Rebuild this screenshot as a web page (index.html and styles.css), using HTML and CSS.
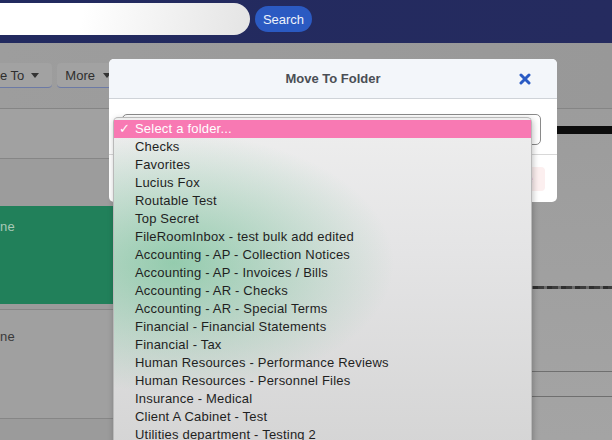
FILE: index.html
```html
<!DOCTYPE html>
<html>
<head>
<meta charset="utf-8">
<link rel="stylesheet" href="styles.css">
</head>
<body>
<div class="app">
  <header class="topbar">
    <div class="search-input"></div>
    <button class="search-btn">Search</button>
  </header>
  <div class="toolbar">
    <span class="tbtn tbtn-move">e To <span class="caret"></span></span>
    <span class="tbtn">More <span class="caret"></span></span>
  </div>
  <div class="content">
    <div class="list">
      <div class="row row-a"></div>
      <div class="row row-b"></div>
      <div class="card"><span class="cell">ne</span></div>
      <div class="row row-c"><span class="cell">ne</span></div>
    </div>
    <div class="preview">
      <div class="pv-bar"></div>
      <div class="pv-dots"></div>
      <div class="pv-line pv-line1"></div>
      <div class="pv-line pv-line2"></div>
    </div>
  </div>

  <div class="modal">
    <div class="modal-head">
      <span class="modal-title">Move To Folder</span>
      <svg class="modal-close" width="12" height="12" viewBox="0 0 12 12"><path d="M2 2 L10 10 M10 2 L2 10" stroke="#2a5bc4" stroke-width="3" stroke-linecap="round"/></svg>
    </div>
    <div class="modal-body">
      <div class="select"></div>
    </div>
    <div class="modal-foot">
      <span class="btn-danger">Move</span>
    </div>
  </div>

  <div class="popup">
    <div class="opt opt-sel"><span class="check">✓</span>Select a folder...</div>
    <div class="opt">Checks</div>
    <div class="opt">Favorites</div>
    <div class="opt">Lucius Fox</div>
    <div class="opt">Routable Test</div>
    <div class="opt">Top Secret</div>
    <div class="opt">FileRoomInbox - test bulk add edited</div>
    <div class="opt">Accounting - AP - Collection Notices</div>
    <div class="opt">Accounting - AP - Invoices / Bills</div>
    <div class="opt">Accounting - AR - Checks</div>
    <div class="opt">Accounting - AR - Special Terms</div>
    <div class="opt">Financial - Financial Statements</div>
    <div class="opt">Financial - Tax</div>
    <div class="opt">Human Resources - Performance Reviews</div>
    <div class="opt">Human Resources - Personnel Files</div>
    <div class="opt">Insurance - Medical</div>
    <div class="opt">Client A Cabinet - Test</div>
    <div class="opt">Utilities department - Testing 2</div>
  </div>
</div>
</body>
</html>
```
FILE: styles.css
```css
* { box-sizing: border-box; }
html, body { margin: 0; padding: 0; }
body {
  width: 612px;
  height: 440px;
  overflow: hidden;
  font-family: "Liberation Sans", Arial, sans-serif;
  background: #9b9b9b;
}
.app {
  position: relative;
  width: 612px;
  height: 440px;
  overflow: hidden;
}
.topbar {
  height: 43px;
  background: linear-gradient(90deg, #222a5f, #252b5f);
  display: flex;
  align-items: flex-start;
  gap: 5px;
}
.search-input {
  margin-top: 3px;
  margin-left: -30px;
  width: 280px;
  height: 32px;
  border-radius: 16px;
  background: linear-gradient(100deg, #ffffff 40%, #e4e4e4 100%);
}
.search-btn {
  margin-top: 6px;
  height: 26px;
  width: 57px;
  border: 0;
  border-radius: 13px;
  background: #2b5ac2;
  color: #eef2fb;
  font-family: "Liberation Sans", Arial, sans-serif;
  font-size: 13px;
  padding: 0;
}
.toolbar {
  height: 66px;
  border-bottom: 1px solid #858585;
  display: flex;
  gap: 5px;
  padding-top: 20px;
  background: linear-gradient(90deg, #9d9d9d, #989898);
}
.tbtn {
  flex-shrink: 0;
  height: 25px;
  display: flex;
  align-items: center;
  gap: 8px;
  padding: 0 13px 0 8px;
  background: #a2a2a2;
  border-radius: 4px;
  border-bottom: 1px solid #6c7aa6;
  color: #2e2e2e;
  font-size: 13px;
  white-space: nowrap;
}
.tbtn-move {
  padding-left: 0;
  gap: 7px;
  border-radius: 0 4px 4px 0;
}
.caret {
  width: 0;
  height: 0;
  border-left: 4px solid transparent;
  border-right: 4px solid transparent;
  border-top: 5px solid #333;
}
.content {
  display: flex;
  height: 331px;
}
.list {
  width: 440px;
  display: flex;
  flex-direction: column;
}
.row { border-bottom: 1px solid #868686; }
.row-a { height: 50px; background: #a1a1a1; }
.row-b { height: 47px; border-bottom: 0; background: #9c9c9c; }
.card {
  height: 98px;
  background: #21805a;
  padding: 11px 0 0 0;
}
.row-c {
  margin-top: 5px;
  border-top: 1px solid #868686;
  height: 110px;
  padding-top: 17px;
  background: #a0a0a0;
}
.cell {
  display: inline-block;
  font-size: 13px;
  letter-spacing: 0.2px;
}
.card .cell { color: #a9c9b8; }
.row-c .cell { color: #3a3a3a; }
.preview {
  flex: 1;
  background: linear-gradient(180deg, #9c9c9c, #a4a4a4);
  padding-top: 17px;
  display: flex;
  flex-direction: column;
}
.pv-bar { height: 8px; background: #0d0d0d; }
.pv-dots {
  margin-top: 152px;
  height: 3px;
  background: repeating-linear-gradient(90deg, #3d3d3d 0 6px, #6a6a6a 6px 9px, #2f2f2f 9px 14px);
}
.pv-line { height: 1px; background: #6f6f6f; }
.pv-line1 { margin-top: 82px; }
.pv-line2 { margin-top: 24px; }

/* modal */
.modal {
  position: absolute;
  left: 109px;
  top: 59px;
  width: 448px;
  height: 143px;
  background: #ffffff;
  border-radius: 5px;
  display: flex;
  flex-direction: column;
  overflow: hidden;
}
.modal-head {
  position: relative;
  height: 40px;
  background: #f3f6fa;
  border-bottom: 1px solid #cfd3d8;
  display: flex;
  align-items: center;
  justify-content: center;
}
.modal-title {
  font-size: 13px;
  font-weight: bold;
  color: #4a4e55;
}
.modal-close {
  position: absolute;
  right: 26px;
  top: 14px;
}
.modal-body {
  padding: 15px 16px 9px 13px;
  border-bottom: 1px solid #d8d8d8;
}
.select {
  height: 31px;
  border: 1px solid #8a8a8a;
  border-radius: 5px;
}
.modal-foot {
  flex: 1;
  display: flex;
  justify-content: flex-end;
  align-items: center;
  padding-right: 12px;
}
.btn-danger {
  height: 24px;
  padding: 0 12px;
  border-radius: 4px;
  background: #fcefef;
  color: #f0a0a0;
  font-size: 13px;
  line-height: 24px;
}

/* native select popup */
.popup {
  position: absolute;
  left: 113px;
  top: 117px;
  width: 419px;
  height: 340px;
  border-radius: 5px 5px 0 0;
  border: 1px solid #b9b9b9;
  border-bottom: 0;
  padding-top: 2px;
  background:
    radial-gradient(ellipse 220px 130px at 60px 145px, rgba(70, 180, 120, 0.5), rgba(70, 180, 120, 0) 100%),
    linear-gradient(180deg, #eeeeee 0%, #e4e4e5 40%, #d4d4d4 100%);
  box-shadow: 1px 2px 6px rgba(0, 0, 0, 0.25);
}
.opt {
  position: relative;
  height: 18px;
  line-height: 18px;
  padding-left: 21px;
  font-size: 13px;
  letter-spacing: 0.2px;
  color: #1f1f1f;
  white-space: nowrap;
}
.opt-sel {
  background: #f879b3;
  color: #ffffff;
}
.check {
  position: absolute;
  left: 5px;
  top: 0;
}
```
